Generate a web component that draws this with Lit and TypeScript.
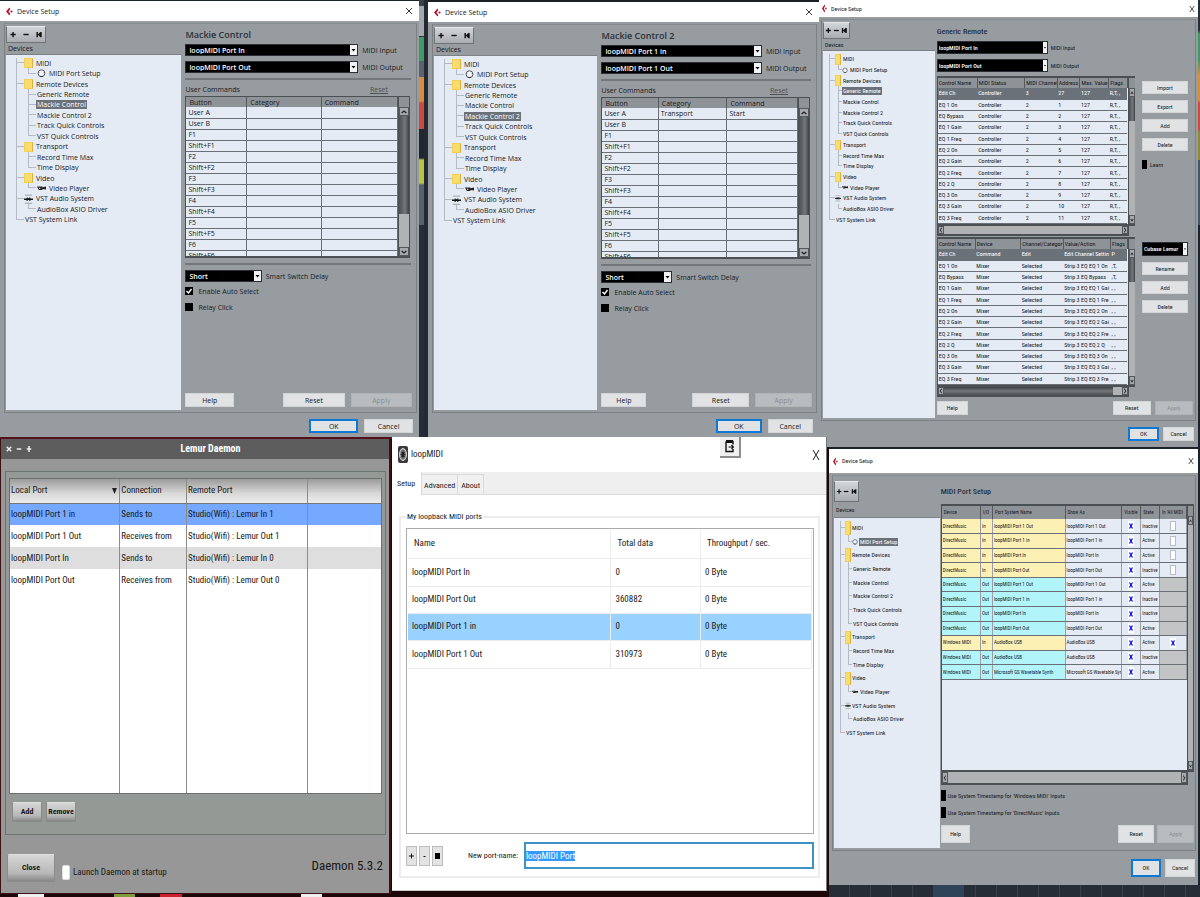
import { LitElement, html, css, svg, nothing } from "lit";
import { customElement, property, query } from "lit/decorators.js";
import { classMap } from "lit/directives/class-map.js";

type Kind = "mackie" | "generic" | "ports";

interface TreeRow {
  label: string;
  level: 0 | 1;
  icon?: "folder" | "din" | "video" | "audio";
  last?: boolean;
}

const TREE: TreeRow[] = [
  { label: "MIDI", level: 0, icon: "folder" },
  { label: "MIDI Port Setup", level: 1, icon: "din", last: true },
  { label: "Remote Devices", level: 0, icon: "folder" },
  { label: "Generic Remote", level: 1 },
  { label: "Mackie Control", level: 1 },
  { label: "Mackie Control 2", level: 1 },
  { label: "Track Quick Controls", level: 1 },
  { label: "VST Quick Controls", level: 1, last: true },
  { label: "Transport", level: 0, icon: "folder" },
  { label: "Record Time Max", level: 1 },
  { label: "Time Display", level: 1, last: true },
  { label: "Video", level: 0, icon: "folder" },
  { label: "Video Player", level: 1, icon: "video", last: true },
  { label: "VST Audio System", level: 0, icon: "audio" },
  { label: "AudioBox ASIO Driver", level: 1, last: true },
  { label: "VST System Link", level: 0, last: true },
];

const BUTTONS = [
  "User A", "User B", "F1", "Shift+F1", "F2", "Shift+F2", "F3", "Shift+F3",
  "F4", "Shift+F4", "F5", "Shift+F5", "F6", "Shift+F6",
];

const CONTROLS = [
  "Edit Ch", "EQ 1 On", "EQ Bypass", "EQ 1 Gain", "EQ 1 Freq", "EQ 2 On",
  "EQ 2 Gain", "EQ 2 Freq", "EQ 2 Q", "EQ 3 On", "EQ 3 Gain", "EQ 3 Freq",
];

const ACTIONS = [
  "Edit Channel Settin", "Strip 3 EQ EQ 1 On", "Strip 3 EQ Bypass", "Strip 3 EQ EQ 1 Gai",
  "Strip 3 EQ EQ 1 Fre", "Strip 3 EQ EQ 2 On", "Strip 3 EQ EQ 2 Gai", "Strip 3 EQ EQ 2 Fre",
  "Strip 3 EQ EQ 2 Q", "Strip 3 EQ EQ 3 On", "Strip 3 EQ EQ 3 Gai", "Strip 3 EQ EQ 3 Fre",
];

const PORTS: [string, string, string, string, boolean | null][] = [
  ["DirectMusic", "In", "loopMIDI Port 1 Out", "Inactive", false],
  ["DirectMusic", "In", "loopMIDI Port 1 in", "Active", false],
  ["DirectMusic", "In", "loopMIDI Port In", "Active", false],
  ["DirectMusic", "In", "loopMIDI Port Out", "Inactive", false],
  ["DirectMusic", "Out", "loopMIDI Port 1 Out", "Active", null],
  ["DirectMusic", "Out", "loopMIDI Port 1 in", "Inactive", null],
  ["DirectMusic", "Out", "loopMIDI Port In", "Inactive", null],
  ["DirectMusic", "Out", "loopMIDI Port Out", "Active", null],
  ["Windows MIDI", "In", "AudioBox USB", "Active", true],
  ["Windows MIDI", "Out", "AudioBox USB", "Inactive", null],
  ["Windows MIDI", "Out", "Microsoft GS Wavetable Synth", "Active", null],
];

const reset = css`
  *, *::before, *::after { box-sizing: border-box; }
  button, input, select { font: inherit; color: inherit; margin: 0; padding: 0; border-radius: 0; min-width: 0; }
  table { border-collapse: collapse; table-layout: fixed; width: 100%; }
  th, td { padding: 0; text-align: left; font-weight: inherit; overflow: hidden; white-space: nowrap; }
  svg { display: block; }
`;

@customElement("device-setup")
export class DeviceSetup extends LitElement {
  @property({ reflect: true }) kind: Kind = "mackie";
  @property() heading = "";
  @property() input = "loopMIDI Port In";
  @property() output = "loopMIDI Port Out";
  @property({ type: Boolean }) assigned = false;

  static styles = [reset, css`
    :host {
      --bar: 20px; --barpad: 6px; --top: 2px; --tool: 17px; --toolw: 40px; --head: 12px; --row: 167px;
      --indent: 10px; --guide: 8px; --twig: 8px; --icon: 9px; --gap: 2px;
      --text: 7px; --cell: 7px; --title: 9px; --field: 12px; --btn: 14px; --arrow: 7px; --check: 8px; --checkw: 8px;
      display: flex; flex-direction: column; min-width: 0; min-height: 0; overflow: hidden;
      background: #979ca0; color: #16191d; font: 7px/1 "Open Sans", "Noto Sans", sans-serif; font-size: var(--text);
    }
    :host([kind="generic"]) {
      --bar: 17px; --barpad: 3px; --toolw: 27px; --row: 171px;
      --indent: 6px; --guide: 6px; --twig: 4px; --icon: 6px; --gap: 1px;
      --text: 6px; --cell: 6px; --title: 8px; --field: 13px; --arrow: 4px; --checkw: 5px; --check: 9px;
      font-family: "Roboto Condensed", Lato, "Open Sans", sans-serif;
    }
    :host([kind="ports"]) {
      --bar: 24px; --barpad: 4px; --top: 5px; --tool: 21px; --toolw: 25px; --head: 16px; --row: 219px;
      --indent: 6px; --guide: 5px; --twig: 4px; --icon: 6px; --gap: 0px;
      --text: 6px; --cell: 5px; --title: 8px; --btn: 18px; --checkw: 5px; --check: 11px;
      font-family: "Roboto Condensed", Lato, "Open Sans", sans-serif;
    }
    .bar { flex: none; height: var(--bar); display: flex; align-items: center; gap: 4px; padding: 0 var(--barpad); background: #fff; }
    .bar span { flex: 1; }
    .bar button { width: 8px; height: 8px; border: 0; background: none; }
    .bar button svg { width: 100%; height: 100%; }
    .logo { width: 7px; height: 9px; }
    :host([kind="generic"]) .logo, :host([kind="ports"]) .logo { width: 5px; }
    :host([kind="generic"]) .bar button, :host([kind="ports"]) .bar button { width: 6px; }
    .panel { flex: 1; min-height: 0; margin: 2px 2px 0 4px; border: 1px solid #7b8085; border-top-color: #878c90; display: grid; grid-template-columns: 176fr 234fr; }
    :host([kind="generic"]) .panel { margin-left: 2px; grid-template-columns: 113fr 261fr; }
    :host([kind="ports"]) .panel { margin-left: 3px; grid-template-columns: 107fr 256fr; }
    .side { display: flex; flex-direction: column; min-width: 0; padding: var(--top) 0 2px 1px; }
    .tool { width: var(--toolw); height: var(--tool); display: grid; grid-template-columns: 1fr 1fr 1fr; border: 1px solid #6f7479; border-top-color: #e6e8ea; background: linear-gradient(#d3d6d9, #a9adb1); }
    .tool button { border: 0; background: none; display: grid; place-items: center; }
    .tool svg { width: 80%; height: 7px; }
    .devices { height: var(--head); line-height: var(--head); padding-left: 2px; border-bottom: 1px solid #7c8185; }
    .tree { flex: 1; background: #e4ebf4; min-height: 0; overflow: hidden; }
    ul { list-style: none; margin: 3px 0 0; padding: 0 0 0 var(--indent); height: var(--row); display: flex; flex-direction: column; }
    li { flex: 1; display: flex; align-items: stretch; min-height: 0; white-space: nowrap; }
    .g { width: var(--guide); display: grid; grid-template-rows: 1fr 1fr; flex: none; }
    .g i { border-left: 1px solid #b4bbc5; }
    .g.stub i:first-child { border-bottom: 1px solid #b4bbc5; }
    .g.end i:last-child { border-left-color: transparent; }
    .g.child { margin-left: 4px; width: var(--twig); }
    :host([kind="generic"]) .g.child, :host([kind="ports"]) .g.child { margin-left: 3px; }
    .ico { width: var(--icon); height: 100%; flex: none; margin-right: var(--gap); }
    .ico.folder { background: #f9dd6c; border: 1px solid #f4cf55; border-right-color: #d9b13c; }
    .child + .ico { margin: 0 2px 0 1px; }
    :host([kind="generic"]) .child + .ico, :host([kind="ports"]) .child + .ico { margin: 0 1px 0 0; }
    .lbl { align-self: center; padding: 1px; }
    .lbl.on { background: #6b7178; color: #fff; }
    .main { display: flex; flex-direction: column; min-width: 0; padding: 4px 6px 5px 4px; }
    h2 { margin: 0; height: 16px; line-height: 14px; font-size: var(--title); font-weight: 600; color: #2b3138; flex: none; }
    :host([kind="generic"]) .main { padding-left: 2px; }
    :host([kind="generic"]) h2 { height: 17px; line-height: 16px; font-weight: 500; }
    :host([kind="ports"]) .main { padding: 5px 1px 7px 1px; }
    :host([kind="ports"]) h2 { height: 23px; line-height: 21px; font-weight: 500; }
    .field { display: flex; align-items: center; gap: 4px; margin-bottom: 5px; height: var(--field); white-space: nowrap; }
    .box { display: flex; height: 100%; background: #000; color: #fff; border: 1px solid #2b2e32; width: 77%; min-width: 0; }
    :host([kind="generic"]) .field { gap: 3px; }
    :host([kind="generic"]) .field .box { width: 44%; }
    .field.short .box { width: 34%; }
    .box select { flex: 1; appearance: none; border: 0; background: #000; color: #fff; font-size: var(--cell); font-weight: 600; line-height: 1; padding-left: 3px; }
    :host([kind="generic"]) .box select { padding-left: 1px; font-weight: 500; }
    .box svg { width: var(--arrow); height: 100%; background: #f2f3f4; flex: none; }
    .rule { height: 2px; background: #72777b; flex: none; margin-right: -1px; }
    .rule.low { margin: 5px -1px 5px 0; }
    .cmd { display: flex; justify-content: space-between; align-items: center; height: 13px; margin-top: 3px; padding-right: 22px; flex: none; }
    .cmd a { color: #4b5157; }
    .frame { display: grid; grid-template-columns: minmax(0, 1fr) 11px; border: 1px solid #4b5055; border-width: 2px 1px 2px 1px; background: #e4ebf4; overflow: hidden; flex: none; font-size: var(--cell); }
    .mk .frame { height: 162px; border-top-width: 1px; }
    .mk { display: contents; }
    .frame > .cells { overflow: hidden; }
    th { background: #8e9398; border-right: 1px solid #555a5f; padding-left: 3px; height: 10px; }
    td { border: 1px solid #6b7076; border-width: 0 1px 1px 0; padding-left: 2px; height: 11px; }
    tbody tr { height: 11px; }
    .vs { display: flex; flex-direction: column; background: #8e9398; border-left: 1px solid #4b5055; padding-top: 10px; }
    .vs button, .hs button { border: 1px solid #55595e; background: #a6aaae; display: grid; place-items: center; flex: none; }
    .vs button { height: 9px; width: 100%; }
    .vs button svg, .hs button svg { width: 100%; height: 6px; }
    .track { flex: 1; background: #b0b2b4; display: flex; min-height: 0; min-width: 0; }
    .vs .track { flex-direction: column; }
    .thumb { background: linear-gradient(90deg, #4a4f54, #73787d 60%, #3d4145); }
    .mk .thumb { height: 75%; }
    .hs .thumb { background: linear-gradient(#3d4145, #73787d 50%, #4a4f54); width: 95%; }
    .hs { display: flex; height: 10px; border: 1px solid #4b5055; border-bottom-width: 2px; flex: none; }
    .hs button { width: 6px; }
    .chk { display: flex; align-items: center; gap: 5px; height: var(--check); margin-bottom: 8px; white-space: nowrap; }
    .chk input { appearance: none; width: var(--checkw); height: var(--check); background: #000; flex: none; }
    .chk input:checked { background: #000 url("data:image/svg+xml,%3Csvg xmlns='http://www.w3.org/2000/svg' viewBox='0 0 8 8'%3E%3Cpath d='M1.5 4l2 2 3-4' fill='none' stroke='white' stroke-width='1.4'/%3E%3C/svg%3E"); }
    .btns { display: flex; gap: 6px; margin-top: auto; margin-right: -2px; flex: none; }
    .btn { height: var(--btn); background: #e1e2e3; border: 1px solid #d2d4d6; text-align: center; }
    .btns .btn { flex: 61 0 0; }
    .btns .btn:first-child { flex-grow: 48; margin-right: 19%; }
    .btns .btn:disabled { background: #b9bcbe; border-color: #b0b3b6; color: #8a8e92; }
    :host([kind="generic"]) .btns { margin-right: -4px; gap: 4px; }
    :host([kind="generic"]) .btns .btn:first-child { flex-grow: 49; margin-right: 55%; }
    :host([kind="ports"]) .btns { margin-right: 0; gap: 3px; }
    :host([kind="ports"]) .btns .btn:first-child { flex-grow: 49; margin-right: 57%; }
    .foot { flex: none; display: flex; justify-content: flex-end; gap: 6px; padding: 6px 6px 4px; }
    .foot .btn { width: 12%; }
    .foot .btn.ok { border: 2px solid #0f78d4; }
    :host([kind="generic"]) .foot { gap: 4px; padding: 6px 4px 6px; }
    :host([kind="generic"]) .foot .btn { width: 31px; }
    :host([kind="ports"]) .foot { gap: 4px; padding: 8px 3px; }
    :host([kind="ports"]) .foot .btn { width: 30px; }

    .gr { display: grid; grid-template-columns: 198fr 46fr; column-gap: 7px; row-gap: 1px; margin: -1px 1px 0 0; }
    .gr .frame { grid-template-columns: minmax(0, 1fr) 7px; border-right-width: 0; }
    .gr table { height: 146px; }
    .gr th { height: 10px; padding-left: 1px; }
    .gr td { border-right: 0; padding-left: 1px; height: auto; }
    .gr .sel td { background: #6b7178; color: #fff; }
    .gr .thumb { height: 20%; }
    .gr .hs .thumb { height: auto; }
    .gr .hs { margin-right: 6px; border-top: 0; }
    .stack { display: flex; flex-direction: column; gap: 6px; padding-top: 5px; min-width: 0; }
    .stack .btn { width: 100%; height: 13px; }
    .stack .chk { margin-top: 3px; gap: 3px; }
    .stack .box { width: 100%; height: 14px; }

    .pt .frame { grid-template-columns: minmax(0, 1fr) 6px; height: 268px; }
    .pt th { height: 13px; padding-left: 2px; }
    .pt td { height: 14px; border-right-color: #9aa0a6; padding-left: 1px; }
    .pt table { height: 174px; }
    .pt .hs { height: 13px; margin-right: 6px; border-top: 0; }
    .pt .chk { margin: 5px 0 6px; gap: 2px; }
    .in { background: #fdf0b4; }
    .out { background: #b1f5fb; }
    .pt td.off { background: #c3c4c5; }
    .pt td.mid { padding: 0; }
    .tick { appearance: none; display: block; margin: 0 auto; width: 6px; height: 10px; border: 1px solid #b9bec6; background: #fff; }
    .tick:checked { border: 0; background: #fff url("data:image/svg+xml,%3Csvg xmlns='http://www.w3.org/2000/svg' viewBox='0 0 6 10'%3E%3Cpath d='M1.500 2.500l3 5M4.500 2.500l-3 5' stroke='%230000e6' stroke-width='1.200'/%3E%3C/svg%3E") center / 6px 10px no-repeat; }
  `];

  private chevron(dir: "up" | "down" | "left" | "right") {
    const d = { up: "M2 6l3-3 3 3", down: "M2 3l3 3 3-3", left: "M7 1L3 4.500l4 3.500", right: "M3 1l4 3.500-4 3.500" }[dir];
    return html`<button aria-label=${"Scroll " + dir}><svg viewBox="0 0 10 9" preserveAspectRatio="none"><path d=${d} fill="none" stroke="#222" stroke-width="1.600"/></svg></button>`;
  }
  private vscroll(thumb = true) {
    return html`<div class="vs">${this.chevron("up")}<div class="track">${thumb ? html`<div class="thumb"></div>` : nothing}</div>${this.chevron("down")}</div>`;
  }
  private hscroll(thumb = false) {
    return html`<div class="hs">${this.chevron("left")}<div class="track">${thumb ? html`<div class="thumb"></div>` : nothing}</div>${this.chevron("right")}</div>`;
  }
  private icon(name?: string) {
    if (name === "folder") return html`<span class="ico folder"></span>`;
    if (name === "din") return html`<svg class="ico" viewBox="0 0 10 10"><circle cx="5" cy="5" r="3.800" fill="#f3f5f8" stroke="#444" stroke-width="1"/><path d="M3.500 8.700h3M2 4v.5M8 4v.5" stroke="#333" stroke-width="1.200"/></svg>`;
    if (name === "video") return html`<svg class="ico" viewBox="0 0 10 10"><path d="M0 3h6v4H2zM6 4l4-1v3.500l-4-.5z" fill="#222"/><circle cx="3" cy="5" r=".8" fill="#ddd"/></svg>`;
    if (name === "audio") return html`<svg class="ico" viewBox="0 0 10 10"><path d="M1 .5h8M1 9.500h8" stroke="#777" stroke-width=".7"/><path d="M0 5h10" stroke="#111" stroke-width="1.600"/><path d="M3.500 3v4M6.500 3v4M5 4v2" stroke="#111" stroke-width="1.200"/></svg>`;
    return nothing;
  }
  private select(value: string, label: string) {
    return html`<div class="box"><select id=${label.replace(/ /g, "-")} aria-label=${label}><option>${value}</option></select>
      <svg viewBox="0 0 7 10" aria-hidden="true"><path d="M1.500 4h4L3.500 6.500z" fill="#000"/></svg></div>`;
  }
  private field(value: string, label: string, short = false) {
    return html`<div class=${classMap({ field: true, short })}>${this.select(value, label)}<label for=${label.replace(/ /g, "-")}>${label}</label></div>`;
  }
  private cols(widths: number[]) {
    const sum = widths.reduce((a, b) => a + b, 0);
    return html`<colgroup>${widths.map((w) => html`<col style="width:${(w / sum) * 100}%">`)}</colgroup>`;
  }
  private head(names: string[]) {
    return html`<thead><tr>${names.map((n) => html`<th scope="col">${n}</th>`)}</tr></thead>`;
  }
  private check(label: string, on = false) {
    return html`<label class="chk"><input type="checkbox" .checked=${on}>${label}</label>`;
  }
  private mackie() {
    return html`
      ${this.field(this.input, "MIDI Input")}${this.field(this.output, "MIDI Output")}
      <div class="rule"></div>
      <div class="cmd"><span>User Commands</span><a href="#reset">Reset</a></div>
      <div class="mk"><div class="frame"><div class="cells"><table>
        ${this.cols([61, 75, 77])}${this.head(["Button", "Category", "Command"])}
        <tbody>${BUTTONS.map((b, i) => html`<tr><td>${b}</td><td>${this.assigned && !i ? "Transport" : ""}</td><td>${this.assigned && !i ? "Start" : ""}</td></tr>`)}</tbody>
      </table></div>${this.vscroll()}</div></div>
      <div class="rule low"></div>
      ${this.field("Short", "Smart Switch Delay", true)}
      ${this.check("Enable Auto Select", true)}${this.check("Relay Click")}`;
  }
  private generic() {
    return html`
      ${this.field(this.input, "MIDI Input")}${this.field(this.output, "MIDI Output")}
      <div class="gr">
        <div>
          <div class="frame"><table>${this.cols([40, 48, 33, 23, 29, 19])}
            ${this.head(["Control Name", "MIDI Status", "MIDI Channel", "Address", "Max. Value", "Flags"])}
            <tbody>${CONTROLS.map((c, i) => html`<tr class=${i ? "" : "sel"}><td>${c}</td><td>Controller</td><td>${i ? 2 : 3}</td><td>${i || 27}</td><td>127</td><td>R,T, ,</td></tr>`)}</tbody>
          </table>${this.vscroll()}</div>${this.hscroll()}
        </div>
        <div class="stack">${["Import", "Export", "Add", "Delete"].map((b) => html`<button class="btn">${b}</button>`)}${this.check("Learn")}</div>
        <div>
          <div class="frame"><table>${this.cols([38, 46, 43, 48, 17])}
            ${this.head(["Control Name", "Device", "Channel/Categor", "Value/Action", "Flags"])}
            <tbody>${CONTROLS.map((c, i) => html`<tr class=${i ? "" : "sel"}><td>${c}</td><td>${i ? "Mixer" : "Command"}</td><td>${i ? "Selected" : "Edit"}</td><td>${ACTIONS[i]}</td><td>${i === 0 ? "P" : i < 3 ? ",T," : ", ,"}</td></tr>`)}</tbody>
          </table>${this.vscroll()}</div>${this.hscroll(true)}
        </div>
        <div class="stack">${this.select("Cubase Lemur", "Preset")}${["Rename", "Add", "Delete"].map((b) => html`<button class="btn">${b}</button>`)}</div>
      </div>`;
  }
  private ports() {
    return html`<div class="pt">
      <div class="frame"><div class="cells"><table>${this.cols([39, 12, 73, 57, 19, 19, 27])}
        ${this.head(["Device", "I/O", "Port System Name", "Show As", "Visible", "State", "In 'All MIDI"])}
        <tbody>${PORTS.map(([dev, io, name, state, all]) => {
          const c = io === "In" ? "in" : "out";
          return html`<tr><td class=${c}>${dev}</td><td class=${c}>${io}</td><td class=${c}>${name}</td><td>${name.replace("Synth", "Syn")}</td>
            <td class="mid"><input class="tick" type="checkbox" aria-label="Visible" .checked=${true}></td><td>${state}</td>
            ${all === null ? html`<td class="off"></td>` : html`<td class="mid"><input class="tick" type="checkbox" aria-label="In All MIDI" .checked=${all}></td>`}</tr>`;
        })}</tbody></table></div>${this.vscroll(false)}</div>
      ${this.hscroll()}
      ${this.check("Use System Timestamp for 'Windows MIDI' Inputs")}${this.check("Use System Timestamp for 'DirectMusic' Inputs")}
    </div>`;
  }

  render() {
    return html`
      <div class="bar">
        <svg class="logo" viewBox="0 0 7 9" preserveAspectRatio="none"><path d="M3.500 .5L0 4.500l3.500 4 .8-1.500L2.500 4.500 4.300 2z" fill="#b3122d"/><circle cx="5.500" cy="4.500" r="1.100" fill="#b3122d"/></svg>
        <span>Device Setup</span>
        <button aria-label="Close"><svg viewBox="0 0 8 8" preserveAspectRatio="none"><path d="M1 1l6 6M7 1L1 7" stroke="#222" stroke-width=".9"/></svg></button>
      </div>
      <div class="panel">
        <div class="side">
          <div class="tool">
            <button aria-label="Add"><svg viewBox="0 0 8 8"><path d="M4 1v6M1 4h6" stroke="#111" stroke-width="1.600"/></svg></button>
            <button aria-label="Remove"><svg viewBox="0 0 8 8"><path d="M1 4h6" stroke="#111" stroke-width="1.600"/></svg></button>
            <button aria-label="Rewind"><svg viewBox="0 0 8 8"><path d="M1 1h1.700v2.700L5.500 1H7v6H5.500L2.700 4.300V7H1z" fill="#111"/></svg></button>
          </div>
          <div class="devices">Devices</div>
          <div class="tree"><ul>${TREE.map((r) => html`<li>
            <span class=${classMap({ g: true, stub: r.level === 0, end: r.level === 0 && !!r.last })}><i></i><i></i></span>
            ${r.level ? html`<span class=${classMap({ g: true, child: true, stub: true, end: !!r.last })}><i></i><i></i></span>` : nothing}
            ${this.icon(r.icon)}<span class=${classMap({ lbl: true, on: r.label === this.heading })}>${r.label}</span>
          </li>`)}</ul></div>
        </div>
        <div class="main">
          <h2>${this.heading}</h2>
          ${this.kind === "mackie" ? this.mackie() : this.kind === "generic" ? this.generic() : this.ports()}
          <div class="btns"><button class="btn">Help</button><button class="btn">Reset</button><button class="btn" disabled>Apply</button></div>
        </div>
      </div>
      <div class="foot"><button class="btn ok">OK</button><button class="btn">Cancel</button></div>`;
  }
}

@customElement("lemur-daemon")
export class LemurDaemon extends LitElement {
  static styles = [reset, css`
    :host { display: flex; flex-direction: column; min-width: 0; background: #979797; border: 1px solid #3a1216; border-width: 0 2px 1px 1px; color: #181818; font: 9px/1 "Roboto Condensed", Lato, "Open Sans", sans-serif; }
    .bar { flex: none; display: grid; grid-template-columns: auto 1fr; align-items: center; height: 20px; background: #5d5d5d; color: #fff; font-weight: 700; font-size: 10px; padding-left: 5px; text-align: center; }
    .ctl { display: flex; gap: 4px; }
    .ctl button { border: 0; background: none; width: 6px; height: 8px; }
    .ctl svg { width: 100%; height: 100%; }
    .box { flex: 1; display: flex; flex-direction: column; margin: 12px 3px 0 4px; border: 1px solid #6c7472; padding: 6px 3px 12px; background: #949996; min-height: 0; }
    .grid { flex: 1; min-height: 0; display: grid; border: 1px solid #6c706e; background: #fff; }
    table { height: 100%; }
    th { height: 24px; background: linear-gradient(#9b9b9b, #d8d8d8 60%, #ececec); border-bottom: 1px solid #777; }
    th, td { border-right: 1px solid #8a8d8c; padding-left: 1px; }
    th:last-child, td:last-child { border-right: 0; }
    td { height: 22px; }
    tr.on td { background: #75a8ff; }
    tr.alt td { background: #dedede; }
    tr.fill td { height: auto; }
    .sort { display: flex; justify-content: space-between; align-items: center; padding-right: 2px; }
    .sort svg { width: 5px; height: 6px; }
    .row { display: flex; gap: 4px; padding: 8px 0 0 3px; }
    button.b { border: 1px solid #8a8a8a; border-top-color: #e0e0e0; background: linear-gradient(#d6d6d6, #b8b8b8 70%, #888); font-weight: 700; font-size: 8px; border-radius: 2px; }
    .row .b { width: 30px; height: 20px; }
    .foot { flex: none; display: flex; align-items: center; padding: 19px 6px 11px 6px; }
    .foot .b { width: 48px; height: 28px; }
    label { display: flex; align-items: center; gap: 3px; margin: 8px 0 0 7px; }
    label input { appearance: none; width: 8px; height: 15px; background: #fff; border: 1px solid #ddd; border-radius: 2px; }
    .ver { margin-left: auto; font-size: 13px; margin-bottom: 6px; }
  `];
  render() {
    const rows = [["loopMIDI Port 1 in", "Sends to", "Studio(Wifi) : Lemur In 1", "on"], ["loopMIDI Port 1 Out", "Receives from", "Studio(Wifi) : Lemur Out 1", ""],
      ["loopMIDI Port In", "Sends to", "Studio(Wifi) : Lemur In 0", "alt"], ["loopMIDI Port Out", "Receives from", "Studio(Wifi) : Lemur Out 0", ""]];
    const g = (d: string) => svg`<path d=${d} stroke="#eee" stroke-width="2"/>`;
    return html`
      <div class="bar"><div class="ctl">
        <button aria-label="Close"><svg viewBox="0 0 8 8">${g("M1 1l6 6M7 1L1 7")}</svg></button>
        <button aria-label="Minimise"><svg viewBox="0 0 8 8">${g("M1 4h6")}</svg></button>
        <button aria-label="Maximise"><svg viewBox="0 0 8 8">${g("M1 4h6M4 0v8")}</svg></button>
      </div><span>Lemur Daemon</span></div>
      <div class="box"><div class="grid"><table>
        <colgroup><col style="width:29.600%"><col style="width:18%"><col style="width:32.700%"><col></colgroup>
        <thead><tr><th scope="col"><div class="sort">Local Port<svg viewBox="0 0 5 6"><path d="M0 0h5L2.500 6z" fill="#222"/></svg></div></th><th scope="col">Connection</th><th scope="col">Remote Port</th><th></th></tr></thead>
        <tbody>${rows.map((r) => html`<tr class=${r[3]}><td>${r[0]}</td><td>${r[1]}</td><td>${r[2]}</td><td></td></tr>`)}
        <tr class="fill"><td></td><td></td><td></td><td></td></tr></tbody>
      </table></div><div class="row"><button class="b">Add</button><button class="b">Remove</button></div></div>
      <div class="foot"><button class="b">Close</button><label><input type="checkbox">Launch Daemon at startup</label><span class="ver">Daemon 5.3.2</span></div>`;
  }
}

@customElement("loop-midi")
export class LoopMidi extends LitElement {
  @query("#port-name") private nameBox!: HTMLInputElement;
  static styles = [reset, css`
    :host { display: flex; flex-direction: column; min-width: 0; background: #fff; border-right: 1px solid #777; border-bottom: 1px solid #ccc; color: #222; font: 9px/1 "Roboto Condensed", Lato, "Open Sans", sans-serif; }
    .bar { flex: none; display: flex; align-items: center; height: 35px; padding: 0 6px; gap: 3px; }
    .bar > svg { width: 10px; height: 17px; }
    .bar > span { flex: 1; }
    .dock { align-self: flex-start; width: 21px; height: 21px; margin-right: 68px; border: 1px solid #8d8d8d; border-width: 0 2px 2px 0; background: #efefef; display: grid; place-items: center; }
    .dock svg { width: 9px; height: 13px; }
    .close { border: 0; background: none; width: 8px; height: 12px; }
    .close svg { width: 100%; height: 100%; }
    .tabs { flex: none; display: flex; align-items: flex-end; height: 23px; background: #efefef; border-bottom: 1px solid #dcdcdc; font-size: 8px; }
    .tabs button { height: 20px; border: 1px solid #dadada; border-width: 1px 1px 0 0; background: #f0f0f0; padding: 3px 2px 0; min-width: 26px; }
    .tabs button[aria-selected="true"] { height: 23px; background: #fff; margin-bottom: -1px; padding: 0 6px 0 5px; border-top: 0; }
    fieldset { flex: 1; min-width: 0; min-height: 0; margin: 18px 6px 12px 7px; border: 2px solid #ececec; padding: 7px 4px 7px 5px; display: flex; flex-direction: column; }
    legend { margin-left: 0; padding: 0 1px; font-size: 8px; }
    .list { flex: 1; min-height: 0; border: 1px solid #a9abad; padding: 1px; }
    th { height: 28px; padding-left: 6px; }
    td { height: 27px; padding-left: 4px; }
    tbody tr:nth-child(3n + 1) td { height: 28px; }
    th, td { border: 1px solid #ececec; border-width: 0 1px 1px 0; }
    .on td { background: #99d1ff; }
    .new { flex: none; display: flex; align-items: center; gap: 2px; margin-top: 8px; }
    .new button { width: 11px; height: 20px; border: 1px solid #bcbcbc; background: #e3e3e3; display: grid; place-items: center; }
    .new button svg { width: 5px; height: 8px; }
    .new label { width: 50px; margin: 0 4px 0 23px; font-size: 8px; white-space: nowrap; }
    .new input { flex: 1; height: 27px; border: 2px solid #3d93c6; outline: 0; background: #fff; padding: 0; }
    .new input::selection { background: #3399ff; color: #fff; }
  `];
  firstUpdated() {
    this.nameBox.focus();
    this.nameBox.select();
  }
  render() {
    const rows = [["loopMIDI Port In", "0"], ["loopMIDI Port Out", "360882"], ["loopMIDI Port 1 in", "0"], ["loopMIDI Port 1 Out", "310973"]];
    return html`
      <div class="bar">
        <svg viewBox="0 0 10 17" preserveAspectRatio="none"><rect width="10" height="17" rx="2" fill="#3a3a3a"/><ellipse cx="5" cy="8.500" rx="3.500" ry="6" fill="#8c8c8c" stroke="#ddd"/><ellipse cx="5" cy="8.500" rx="1.600" ry="2.800" fill="#222"/><path d="M5 4v9M2.500 8.500h5M3 5.500l4 6M7 5.500l-4 6" stroke="#222" stroke-width=".8"/></svg>
        <span>loopMIDI</span>
        <button class="dock" aria-label="Dock"><svg viewBox="0 0 9 13"><path d="M1 1.500h7v3M8 9v2.500H1v-10" fill="none" stroke="#111" stroke-width="1.400"/><path d="M1 1.500h7" stroke="#111" stroke-width="3"/><path d="M3.500 7h5M6.500 5l2 2-2 2" stroke="#111" fill="none" stroke-width="1.200"/></svg></button>
        <button class="close" aria-label="Close"><svg viewBox="0 0 8 12" preserveAspectRatio="none"><path d="M1 1l6 10M7 1L1 11" stroke="#222" stroke-width="1"/></svg></button>
      </div>
      <div class="tabs" role="tablist"><button role="tab" aria-selected="true">Setup</button><button role="tab">Advanced</button><button role="tab">About</button></div>
      <fieldset><legend>My loopback MIDI ports</legend>
        <div class="list"><table><colgroup><col style="width:50.300%"><col style="width:22.200%"><col></colgroup>
          <thead><tr><th scope="col">Name</th><th scope="col">Total data</th><th scope="col">Throughput / sec.</th></tr></thead>
          <tbody>${rows.map((r, i) => html`<tr class=${i === 2 ? "on" : ""}><td>${r[0]}</td><td>${r[1]}</td><td>0 Byte</td></tr>`)}</tbody></table></div>
        <div class="new">
          <button aria-label="Add port"><svg viewBox="0 0 5 8"><path d="M2.500 1.500v5M0 4h5" stroke="#111"/></svg></button>
          <button aria-label="Remove port"><svg viewBox="0 0 5 8"><path d="M1.500 4.500h2" stroke="#111"/></svg></button>
          <button aria-label="Stop"><svg viewBox="0 0 5 8"><path d="M0 1h5v6H0z" fill="#000"/></svg></button>
          <label for="port-name">New port-name:</label><input id="port-name" type="text" .value=${"loopMIDI Port"}>
        </div>
      </fieldset>`;
  }
}

@customElement("app-root")
export class AppRoot extends LitElement {
  static styles = css`
    :host {
      display: grid; height: 100vh; min-height: 800px; background: #1c2128; overflow: hidden;
      grid-template-columns: minmax(0, 391fr) minmax(0, 1fr) minmax(0, 27fr) minmax(0, 9fr) minmax(0, 391fr) minmax(0, 8fr) minmax(0, 2fr) minmax(0, 369fr) minmax(0, 2fr);
      grid-template-rows: minmax(0, 1fr) minmax(0, 1fr) minmax(0, 435fr) minmax(0, 2fr) minmax(0, 8fr) minmax(0, 2fr) minmax(0, 436fr) minmax(0, 6fr) minmax(0, 3fr) minmax(0, 3fr);
    }
    .one { grid-area: 2 / 1 / 4 / 4; }
    .two { grid-area: 3 / 5 / 4 / 6; }
    .three { grid-area: 1 / 6 / 6 / 9; }
    .daemon { grid-area: 5 / 1 / 10 / 2; }
    .loop { grid-area: 4 / 3 / 9 / 7; }
    .four { grid-area: 7 / 8 / 8 / 9; }
    .tracks { grid-area: 1 / 4 / 4 / 5; background: linear-gradient(#3a4048 0 6px, #a4a9ad 6px 36px, #2c313a 36px 37px, #3f9b63 37px 61px, #59636f 61px 77px, #d98d3a 77px 101px, #cf4a3c 103px 129px, #20262f 129px 158px, #b9c244 160px 183px, #56616f 185px 225px, #262d37 225px); border-right: 4px solid #242a33; }
    .edge { grid-area: 1 / 9 / 8 / 10; background: linear-gradient(#262d37 0 30px, #3f9b63 34px 60px, #d98d3a 75px 100px, #cf4a3c 103px 130px, #8f8b32 132px 160px, #43566b 160px 225px, #1c232c 225px); }
    .seam { grid-area: 4 / 1 / 11 / 8; background: #1d0708 linear-gradient(90deg, #1d0708 0 18px, #eee 18px 44px, #1d0708 44px 114px, #7f9c3c 114px 135px, #1d0708 135px 160px, #c8202c 160px 182px, #1d0708 182px 301px, #eee 301px 322px, #1d0708 322px); border-top: 2px solid #56101c; }
    .floor { grid-area: 8 / 8 / 11 / 10; background: linear-gradient(90deg, transparent 0 104px, #2f4359 104px 135px, transparent 135px), repeating-linear-gradient(90deg, #262d36 0 20px, #39414b 20px 21px); }
  `;
  render() {
    return html`
      <div class="tracks"></div><div class="edge"></div><div class="seam"></div><div class="floor"></div>
      <device-setup class="one" heading="Mackie Control"></device-setup>
      <device-setup class="two" heading="Mackie Control 2" input="loopMIDI Port 1 in" output="loopMIDI Port 1 Out" assigned></device-setup>
      <device-setup class="three" kind="generic" heading="Generic Remote"></device-setup>
      <lemur-daemon class="daemon"></lemur-daemon>
      <loop-midi class="loop"></loop-midi>
      <device-setup class="four" kind="ports" heading="MIDI Port Setup"></device-setup>`;
  }
}
